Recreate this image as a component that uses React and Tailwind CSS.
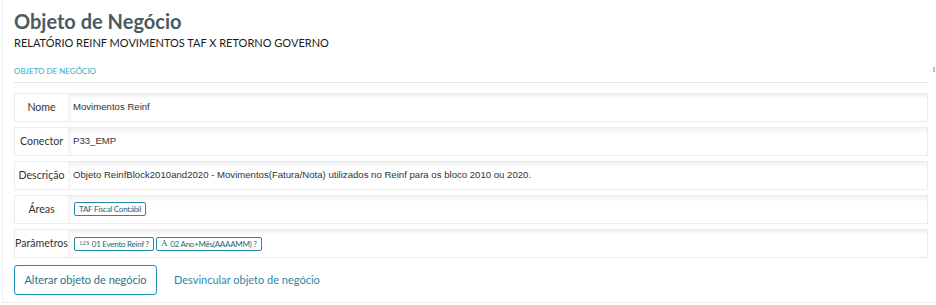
import React from "react";

const font = { fontFamily: "Lato, 'Noto Sans', sans-serif" };

function Row({ label, children }) {
  return (
    <div className="flex h-[29px] border border-[#ececec] bg-white">
      <div className="flex w-[53px] shrink-0 items-center justify-center text-[10.6px] text-[#333]">
        {label}
      </div>
      <div className="flex flex-1 items-center bg-white pl-[5px] shadow-[inset_2px_3px_4px_rgba(0,0,0,0.06)] font-['Liberation_Sans',Arial,sans-serif] text-[9.6px] text-[#333]">
        {children}
      </div>
    </div>
  );
}

function Tag({ children }) {
  return (
    <span className="inline-flex h-[14px] items-center rounded-[2px] border border-[#1b8ea3] px-[4px] font-['Lato',sans-serif] text-[8px] tracking-[-0.25px] text-[#1d6479]">
      {children}
    </span>
  );
}

export default function App() {
  return (
    <div className="h-[305px] w-[936px] bg-white" style={font}>
      <div className="ml-[2px] h-[303px] border-b border-l border-[#ededed] pl-[11px] pr-[1px]">
        <div className="pt-[8px] text-[20px] font-bold leading-[26px] text-[#4a5b5f]">Objeto de Negócio</div>
        <div className="mt-[2px] text-[11px] leading-[14px] text-[#1c1c1c]">RELATÓRIO REINF MOVIMENTOS TAF X RETORNO GOVERNO</div>
        <div className="mt-[15px] flex items-start">
          <div className="flex-1 border-b border-[#e4e4e4] pb-[5px] text-[8px] uppercase leading-[12px] text-[#2cb0c4]">Objeto de Negócio</div>
          <div className="ml-[5px] mt-[2px] h-[5px] w-[2px] bg-gradient-to-b from-[#f0a8b8] to-[#8ad0e0]" />
        </div>
        <div className="mr-[7px] mt-[10px] flex flex-col gap-[5px]">
          <Row label="Nome">Movimentos Reinf</Row>
          <Row label="Conector">P33_EMP</Row>
          <Row label="Descrição">Objeto ReinfBlock2010and2020 - Movimentos(Fatura/Nota) utilizados no Reinf para os bloco 2010 ou 2020.</Row>
          <Row label="Áreas">
            <span className="ml-[1px]"><Tag>TAF Fiscal Contábil</Tag></span>
          </Row>
          <Row label="Parâmetros">
            <div className="ml-[1px] flex gap-[2px]">
              <Tag><span className="mr-[3px] font-['Liberation_Serif',serif] text-[7px]">123</span>01 Evento Reinf ?</Tag>
              <Tag><span className="mr-[3px] font-['Liberation_Serif',serif] text-[9px]">A</span>02 Ano+Mês(AAAAMM) ?</Tag>
            </div>
          </Row>
        </div>
        <div className="mt-[7px] flex items-center">
          <button className="h-[30px] w-[143px] rounded-[3px] border border-[#1b8fae] text-[11px] text-[#2a6f86]">Alterar objeto de negócio</button>
          <button className="ml-[17px] text-[11px] text-[#2e86a6]">Desvincular objeto de negócio</button>
        </div>
      </div>
    </div>
  );
}
